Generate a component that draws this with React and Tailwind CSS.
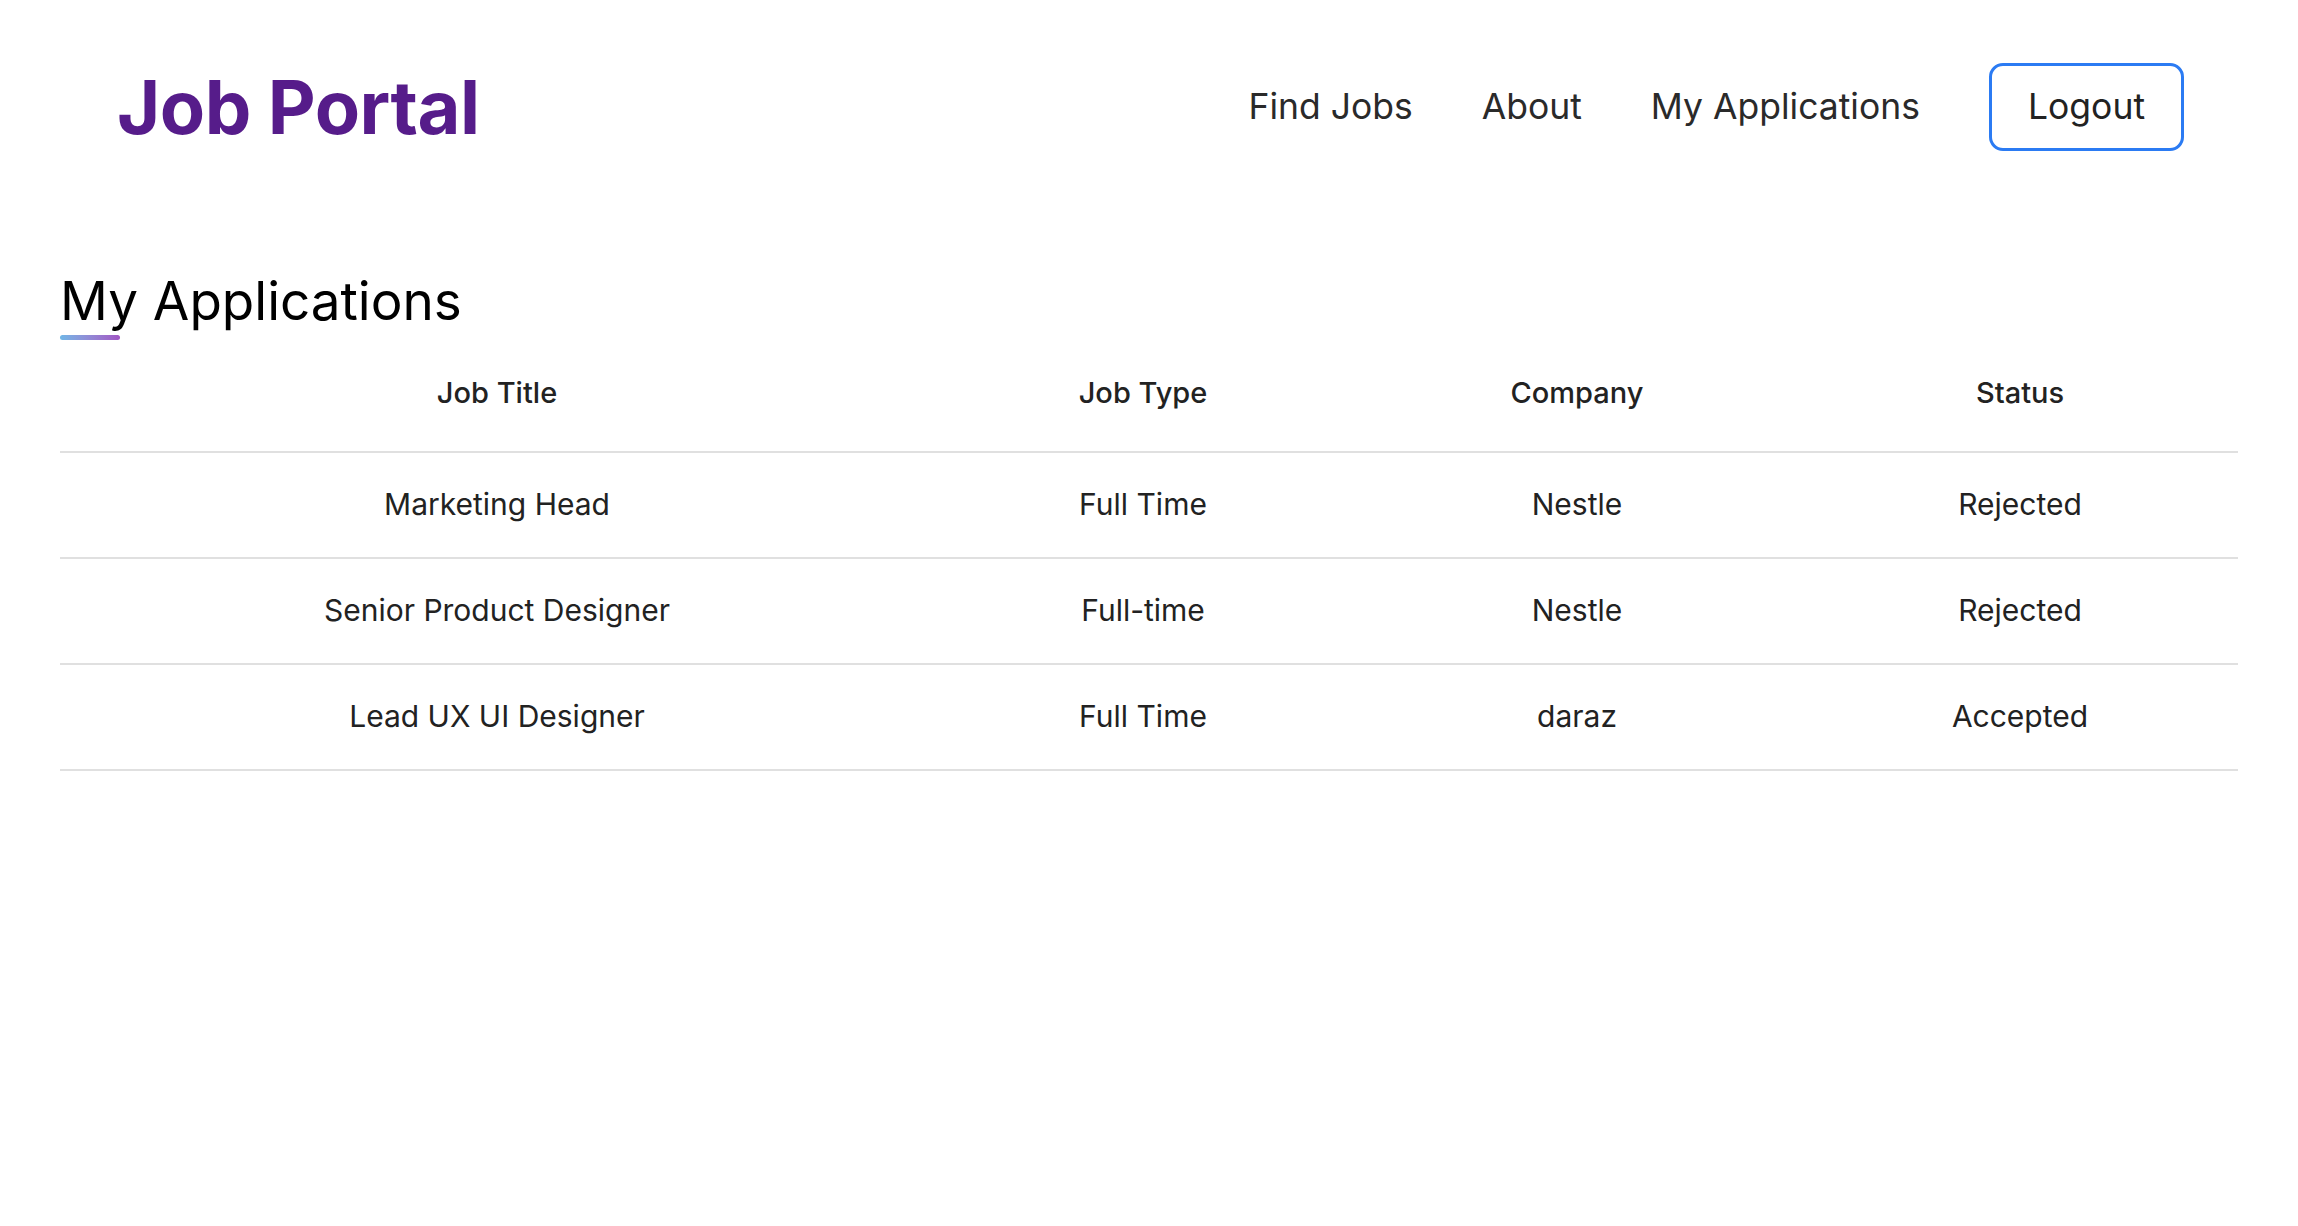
import React from 'react';

const applications = [
  { title: 'Marketing Head', type: 'Full Time', company: 'Nestle', status: 'Rejected' },
  { title: 'Senior Product Designer', type: 'Full-time', company: 'Nestle', status: 'Rejected' },
  { title: 'Lead UX UI Designer', type: 'Full Time', company: 'daraz', status: 'Accepted' },
];

function Navbar() {
  return (
    <nav className="flex items-center justify-between pl-[117px] pr-[114px] h-[214px]">
      <h1 className="text-[74px] font-bold tracking-[-0.5px] text-[#561c8a]">Job Portal</h1>
      <ul className="flex items-center text-[35.5px] text-[#2a2a2a]">
        <li className="mr-[69px]">Find Jobs</li>
        <li className="mr-[69px]">About</li>
        <li className="mr-[69px]">My Applications</li>
        <li>
          <button className="h-[88px] px-[36px] border-[3px] border-[#2b7bf3] rounded-[14px] text-[#222]">
            Logout
          </button>
        </li>
      </ul>
    </nav>
  );
}

function MyApplications() {
  return (
    <div className="px-[60px] pt-[56px]">
      <div className="mb-[4px]">
        <h2 className="text-[53px] leading-[1.2] text-black">My Applications</h2>
        <div className="w-[60px] h-[5px] rounded-full bg-gradient-to-r from-[#6fb6e6] to-[#a055c4] mt-[1px]" />
      </div>
      <table className="w-full border-collapse text-[#222]">
        <thead>
          <tr className="border-b-2 border-[#e0e0e0] h-[108px]">
            <th className="w-[874px] font-medium text-[29px] pb-[8px]">Job Title</th>
            <th className="w-[418px] font-medium text-[29px] pb-[8px]">Job Type</th>
            <th className="w-[450px] font-medium text-[29px] pb-[8px]">Company</th>
            <th className="font-medium text-[29px] pb-[8px]">Status</th>
          </tr>
        </thead>
        <tbody>
          {applications.map((app, i) => (
            <tr key={i} className="border-b-2 border-[#e0e0e0] h-[106px] text-[30px] text-center">
              <td>{app.title}</td>
              <td>{app.type}</td>
              <td>{app.company}</td>
              <td>{app.status}</td>
            </tr>
          ))}
        </tbody>
      </table>
    </div>
  );
}

export default function App() {
  return (
    <div className="min-h-screen bg-white font-['Inter',sans-serif]">
      <Navbar />
      <MyApplications />
    </div>
  );
}
